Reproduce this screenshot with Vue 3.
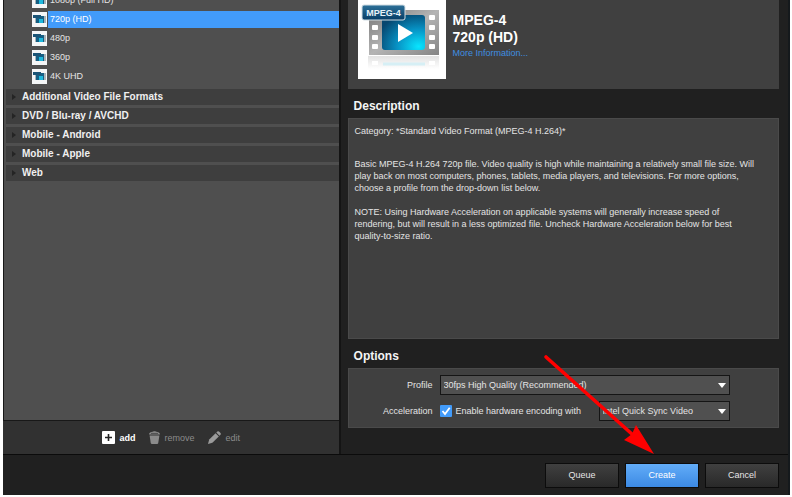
<script setup>
import { ref } from 'vue'

const presets = ['1080p (Full HD)', '720p (HD)', '480p', '360p', '4K UHD']
const groups = [
  'Additional Video File Formats',
  'DVD / Blu-ray / AVCHD',
  'Mobile - Android',
  'Mobile - Apple',
  'Web'
]
const selected = ref('720p (HD)')
const profile = ref('30fps High Quality (Recommended)')
const encoder = ref('Intel Quick Sync Video')
const accelerate = ref(true)
</script>

<template>
  <div class="window">
    <div class="main">
      <aside class="sidebar">
        <div class="tree">
          <ul class="presets">
            <li v-for="name in presets" :key="name">
              <button class="preset" :class="{ active: name === selected }" @click="selected = name">
                <svg class="thumb" viewBox="0 0 15 15" aria-hidden="true">
                  <rect width="15" height="15" fill="#f4f6f7" />
                  <rect x="3" y="4" width="11" height="7" fill="#a9b3b8" />
                  <rect x="4" y="4" width="8" height="7" fill="#155f84" />
                  <rect x="7" y="7" width="4" height="4" fill="#1fb9dd" />
                  <rect x="1" y="3" width="8" height="3" fill="#1b5577" />
                </svg>
                <span class="preset-name">{{ name }}</span>
              </button>
            </li>
          </ul>
          <button v-for="name in groups" :key="name" class="group">
            <svg class="chevron" viewBox="0 0 4 6" aria-hidden="true"><path d="M0 0L4 3L0 6Z" fill="#242424" /></svg>
            {{ name }}
          </button>
        </div>
        <div class="toolbar">
          <button class="tool add">
            <svg class="tool-icon" viewBox="0 0 13 13" aria-hidden="true">
              <rect width="13" height="13" rx="1" fill="#fff" />
              <path d="M6.5 3V10M3 6.5H10" stroke="#222" stroke-width="1.6" />
            </svg>
            add
          </button>
          <button class="tool">
            <svg class="tool-icon bin" viewBox="0 0 11 13" aria-hidden="true">
              <path d="M0 3.6C0 1.4 2 1 3.5 .8C4 -.1 7 -.1 7.5 .8C9 1 11 1.4 11 3.6Z" fill="#8b8b8b" />
              <path d="M2 2.4H9" stroke="#333" stroke-width=".7" />
              <path d="M.6 4.6H10.4L9.2 12.2Q9 13 8 13H3Q2 13 1.8 12.2Z" fill="#8b8b8b" />
            </svg>
            remove
          </button>
          <button class="tool">
            <svg class="tool-icon" viewBox="0 0 13 13" aria-hidden="true">
              <path d="M0 13L1.2 8.6L7.6 2.2L10.8 5.4L4.4 11.8Z" fill="#9a9a9a" />
              <path d="M8.3 1.5L9.3 .5Q10.2 -.2 11 .5L12.5 2Q13.2 2.8 12.5 3.7L11.5 4.7Z" fill="#9a9a9a" />
            </svg>
            edit
          </button>
        </div>
      </aside>

      <section class="details">
        <div class="summary">
          <svg class="poster" viewBox="0 0 88 79" role="img" aria-label="MPEG-4">
            <defs>
              <linearGradient id="film" x1="0" y1="0" x2="1" y2="1">
                <stop offset="0" stop-color="#777" />
                <stop offset=".5" stop-color="#b4b4b4" />
                <stop offset="1" stop-color="#858585" />
              </linearGradient>
              <radialGradient id="screen" cx=".85" cy=".9" r="1">
                <stop offset="0" stop-color="#08e5ff" />
                <stop offset=".5" stop-color="#0792c4" />
                <stop offset="1" stop-color="#06466f" />
              </radialGradient>
              <linearGradient id="tag" x1="0" y1="0" x2="0" y2="1">
                <stop offset="0" stop-color="#2e7199" />
                <stop offset="1" stop-color="#063c65" />
              </linearGradient>
              <linearGradient id="mirror" x1="0" y1="0" x2="0" y2="1">
                <stop offset="0" stop-color="#e2e2e2" />
                <stop offset="1" stop-color="#fff" />
              </linearGradient>
            </defs>
            <rect width="88" height="79" fill="#fff" />
            <rect x="10" y="56" width="71" height="13" fill="url(#mirror)" />
            <path d="M14 61h6v4h-6zM71 61h6v4h-6z" fill="#fff" />
            <path d="M25 64H67" stroke="#d6eff5" stroke-width="3" />
            <rect x="11" y="10" width="70" height="45" fill="url(#film)" />
            <g fill="#fff">
              <rect x="14" y="25" width="6" height="5" rx="1" />
              <rect x="14" y="35" width="6" height="5" rx="1" />
              <rect x="14" y="44" width="6" height="5" rx="1" />
              <rect x="71" y="15" width="6" height="5" rx="1" />
              <rect x="71" y="25" width="6" height="5" rx="1" />
              <rect x="71" y="35" width="6" height="5" rx="1" />
              <rect x="71" y="44" width="6" height="5" rx="1" />
            </g>
            <rect x="24" y="15" width="43" height="35" rx="3" fill="url(#screen)" />
            <path d="M40 24L55 33L40 42Z" fill="#fff" />
            <rect x="4" y="5" width="43" height="15" rx="2" fill="url(#tag)" stroke="#d2dde3" />
            <text x="25.5" y="16" text-anchor="middle" class="tag-text">MPEG-4</text>
          </svg>
          <div class="heading">
            <h1>MPEG-4<br>720p (HD)</h1>
            <a href="#more">More Information...</a>
          </div>
        </div>

        <h2>Description</h2>
        <div class="description">
          <p class="category">Category: *Standard Video Format (MPEG-4 H.264)*</p>
          <p>Basic MPEG-4 H.264 720p file. Video quality is high while maintaining a relatively small file size. Will<br>play back on most computers, phones, tablets, media players, and televisions. For more options,<br>choose a profile from the drop-down list below.</p>
          <p>NOTE: Using Hardware Acceleration on applicable systems will generally increase speed of<br>rendering, but will result in a less optimized file. Uncheck Hardware Acceleration below for best<br>quality-to-size ratio.</p>
        </div>

        <h2>Options</h2>
        <div class="options">
          <label class="label" for="profile">Profile</label>
          <div class="select-box">
            <select id="profile" v-model="profile"><option>30fps High Quality (Recommended)</option></select>
            <svg class="caret" viewBox="0 0 8 5" aria-hidden="true"><path d="M0 0H8L4 5Z" fill="#fff" /></svg>
          </div>
          <span class="label">Acceleration</span>
          <div class="accel">
            <span class="check">
              <input id="accelerate" v-model="accelerate" type="checkbox">
              <svg class="tick" viewBox="0 0 12 12" aria-hidden="true"><path d="M2.5 6L5 9L9.7 2.8" fill="none" stroke="#fff" stroke-width="1.8" /></svg>
            </span>
            <label for="accelerate">Enable hardware encoding with</label>
            <div class="select-box encoder">
              <select v-model="encoder" aria-label="Hardware encoder"><option>Intel Quick Sync Video</option></select>
              <svg class="caret" viewBox="0 0 8 5" aria-hidden="true"><path d="M0 0H8L4 5Z" fill="#fff" /></svg>
            </div>
          </div>
        </div>
      </section>
    </div>

    <footer>
      <button class="action">Queue</button>
      <button class="action primary">Create</button>
      <button class="action">Cancel</button>
    </footer>

    <svg class="pointer" viewBox="0 0 114 102" aria-hidden="true">
      <path d="M5 3L92 81" stroke="#f00" stroke-width="3.6" stroke-linecap="round" />
      <path d="M113 100L83 86L91 80L95 71Z" fill="#f00" />
    </svg>
  </div>
</template>

<style>
body { background: #fff; }
</style>

<style scoped>
* { box-sizing: border-box; }
.window {
  position: relative;
  display: flex;
  flex-direction: column;
  height: calc(100vh - 2px);
  margin: 0 2px 0 3px;
  overflow: hidden;
  background: #202020;
  border-right: 2px solid #15191c;
  color: #e4e4e4;
  font: 9px/12px "Liberation Sans", Arial, sans-serif;
}
button, select, input { font: inherit; color: inherit; }
button { border: 0; padding: 0; background: none; }
ul, p, h1, h2 { margin: 0; padding: 0; }
ul { list-style: none; }
.main { flex: 1; display: flex; min-height: 0; border-bottom: 1px solid #0b0b0b; }
.sidebar { flex: 0 0 43%; display: flex; flex-direction: column; border-right: 2px solid #141414; }
.tree {
  flex: 1;
  display: flex;
  flex-direction: column;
  gap: 3px;
  min-height: 0;
  margin-top: -9px;
  padding-left: 2px;
  background: #4f4f4f;
  border-left: 1px solid #181818;
  border-bottom: 1px solid #181818;
}
.preset { display: flex; align-items: center; width: 100%; height: 19px; padding-left: 26px; text-align: left; }
.thumb { flex: none; width: 15px; height: 15px; margin-right: 1px; }
.preset-name { flex: 1; height: 17px; padding-left: 2px; line-height: 17px; }
.active .preset-name { background: #429bfa; color: #fff; }
.group {
  display: flex;
  align-items: center;
  gap: 6px;
  flex: none;
  width: 100%;
  height: 16px;
  padding-left: 6px;
  background: #3e3e3e;
  color: #f0f0f0;
  font-size: 10px;
  font-weight: bold;
}
.chevron { width: 4px; height: 6px; }
.toolbar { display: flex; align-items: center; justify-content: center; gap: 13px; height: 33px; background: #313131; }
.tool { display: flex; align-items: center; gap: 5px; color: #8b8b8b; }
.tool-icon { width: 13px; height: 13px; }
.bin { width: 11px; }
.add { color: #fff; font-weight: bold; }
.details { flex: 1; display: flex; flex-direction: column; min-width: 0; padding: 0 9px 26px 7px; }
.summary { display: flex; gap: 7px; height: 89px; padding-left: 10px; background: #404040; }
.poster { width: 88px; height: 79px; }
.tag-text { fill: #e8f2f8; font-size: 9px; font-weight: bold; }
.heading { padding-top: 12px; }
h1 { color: #fff; font-size: 14px; line-height: 17px; }
a { display: block; color: #3f8fe0; line-height: 14px; text-decoration: none; }
h2 { flex: none; height: 29px; padding-left: 6px; color: #f4f4f4; font-size: 12px; line-height: 34px; }
.description { flex: 1; padding: 6px; background: #404040; border: 1px solid #4a4a4a; }
.description p { margin-bottom: 12px; white-space: nowrap; }
.description .category { margin-bottom: 21px; }
.options { display: grid; grid-template-columns: 78px 290px; column-gap: 7px; row-gap: 6px; align-items: center; padding: 6px; background: #404040; border: 1px solid #4a4a4a; }
.label { text-align: right; }
.select-box { position: relative; height: 20px; }
.select-box select { appearance: none; width: 100%; height: 20px; padding: 0 18px 0 3px; border: 1px solid #151515; border-radius: 0; background: #505050; }
.caret { position: absolute; top: 8px; right: 4px; width: 8px; height: 5px; pointer-events: none; }
.accel { display: flex; align-items: center; gap: 4px; white-space: nowrap; }
.check { position: relative; width: 12px; height: 12px; }
.check input { appearance: none; display: block; width: 12px; height: 12px; margin: 0; background: #555; border-radius: 1px; }
.check input:checked { background: #429bfa; }
.check input:not(:checked) + .tick { display: none; }
.tick { position: absolute; inset: 0; pointer-events: none; }
.encoder { width: 131px; margin-left: auto; }
footer { display: flex; align-items: center; justify-content: flex-end; gap: 6px; height: 40px; padding-right: 9px; }
.action { width: 74px; height: 25px; border: 1px solid #0c0c0c; background: linear-gradient(#404040, #292929); color: #e6e6e6; }
.primary { background: linear-gradient(#62acf8, #3c8ae4); color: #fff; }
.pointer { position: absolute; left: 538px; top: 354px; width: 114px; height: 102px; pointer-events: none; }
</style>
